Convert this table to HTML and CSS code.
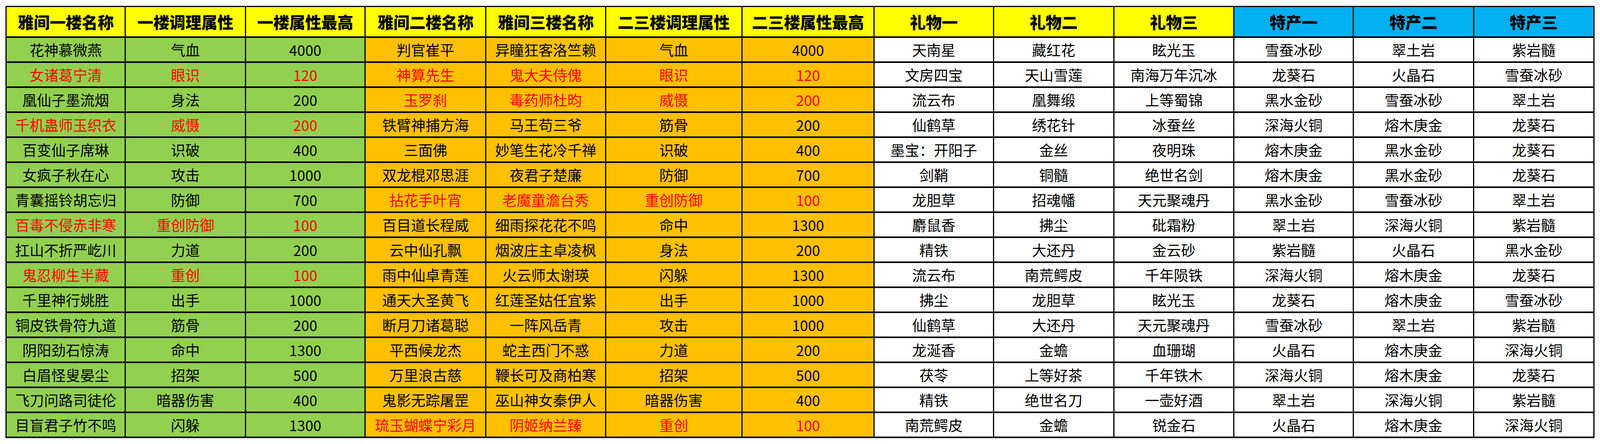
FILE: index.html
```html
<!DOCTYPE html>
<html lang="zh-CN">
<head>
<meta charset="utf-8">
<title>雅间属性表</title>
<link rel="stylesheet" href="styles.css">
</head>
<body>
<div class="sheet">
  <div class="cell head yellow">雅间一楼名称</div>
  <div class="cell head yellow">一楼调理属性</div>
  <div class="cell head yellow">一楼属性最高</div>
  <div class="cell head yellow">雅间二楼名称</div>
  <div class="cell head yellow">雅间三楼名称</div>
  <div class="cell head yellow">二三楼调理属性</div>
  <div class="cell head yellow">二三楼属性最高</div>
  <div class="cell head yellow">礼物一</div>
  <div class="cell head yellow">礼物二</div>
  <div class="cell head yellow">礼物三</div>
  <div class="cell head blue">特产一</div>
  <div class="cell head blue">特产二</div>
  <div class="cell head blue">特产三</div>

  <div class="cell green">花神慕微燕</div><div class="cell green">气血</div><div class="cell green">4000</div>
  <div class="cell orange">判官崔平</div><div class="cell orange">异瞳狂客洛竺赖</div><div class="cell orange">气血</div><div class="cell orange">4000</div>
  <div class="cell">天南星</div><div class="cell">藏红花</div><div class="cell">眩光玉</div><div class="cell">雪蚕冰砂</div><div class="cell">翠土岩</div><div class="cell">紫岩髓</div>

  <div class="cell green red">女诸葛宁清</div><div class="cell green red">眼识</div><div class="cell green red">120</div>
  <div class="cell orange red">神算先生</div><div class="cell orange red">鬼大夫侍傀</div><div class="cell orange red">眼识</div><div class="cell orange red">120</div>
  <div class="cell">文房四宝</div><div class="cell">天山雪莲</div><div class="cell">南海万年沉冰</div><div class="cell">龙葵石</div><div class="cell">火晶石</div><div class="cell">雪蚕冰砂</div>

  <div class="cell green">凰仙子墨流烟</div><div class="cell green">身法</div><div class="cell green">200</div>
  <div class="cell orange red">玉罗刹</div><div class="cell orange red">毒药师杜昀</div><div class="cell orange red">威慑</div><div class="cell orange red">200</div>
  <div class="cell">流云布</div><div class="cell">凰舞缎</div><div class="cell">上等蜀锦</div><div class="cell">黑水金砂</div><div class="cell">雪蚕冰砂</div><div class="cell">翠土岩</div>

  <div class="cell green red">千机蛊师玉织衣</div><div class="cell green red">威慑</div><div class="cell green red">200</div>
  <div class="cell orange">铁臂神捕方海</div><div class="cell orange">马王苟三爷</div><div class="cell orange">筋骨</div><div class="cell orange">200</div>
  <div class="cell">仙鹤草</div><div class="cell">绣花针</div><div class="cell">冰蚕丝</div><div class="cell">深海火铜</div><div class="cell">熔木庚金</div><div class="cell">龙葵石</div>

  <div class="cell green">百变仙子席琳</div><div class="cell green">识破</div><div class="cell green">400</div>
  <div class="cell orange">三面佛</div><div class="cell orange">妙笔生花冷千禅</div><div class="cell orange">识破</div><div class="cell orange">400</div>
  <div class="cell">墨宝：开阳子</div><div class="cell">金丝</div><div class="cell">夜明珠</div><div class="cell">熔木庚金</div><div class="cell">黑水金砂</div><div class="cell">龙葵石</div>

  <div class="cell green">女疯子秋在心</div><div class="cell green">攻击</div><div class="cell green">1000</div>
  <div class="cell orange">双龙棍邓思涯</div><div class="cell orange">夜君子楚廉</div><div class="cell orange">防御</div><div class="cell orange">700</div>
  <div class="cell">剑鞘</div><div class="cell">铜髓</div><div class="cell">绝世名剑</div><div class="cell">熔木庚金</div><div class="cell">黑水金砂</div><div class="cell">龙葵石</div>

  <div class="cell green">青囊摇铃胡忘归</div><div class="cell green">防御</div><div class="cell green">700</div>
  <div class="cell orange red">拈花手叶宵</div><div class="cell orange red">老魔童澹台秀</div><div class="cell orange red">重创防御</div><div class="cell orange red">100</div>
  <div class="cell">龙胆草</div><div class="cell">招魂幡</div><div class="cell">天元聚魂丹</div><div class="cell">黑水金砂</div><div class="cell">雪蚕冰砂</div><div class="cell">翠土岩</div>

  <div class="cell green red">百毒不侵赤非寒</div><div class="cell green red">重创防御</div><div class="cell green red">100</div>
  <div class="cell orange">百目道长程威</div><div class="cell orange">细雨探花花不鸣</div><div class="cell orange">命中</div><div class="cell orange">1300</div>
  <div class="cell">麝鼠香</div><div class="cell">拂尘</div><div class="cell">砒霜粉</div><div class="cell">翠土岩</div><div class="cell">深海火铜</div><div class="cell">紫岩髓</div>

  <div class="cell green">扛山不折严屹川</div><div class="cell green">力道</div><div class="cell green">200</div>
  <div class="cell orange">云中仙孔飘</div><div class="cell orange">烟波庄主卓凌枫</div><div class="cell orange">身法</div><div class="cell orange">200</div>
  <div class="cell">精铁</div><div class="cell">大还丹</div><div class="cell">金云砂</div><div class="cell">紫岩髓</div><div class="cell">火晶石</div><div class="cell">黑水金砂</div>

  <div class="cell green red">鬼忍柳生半藏</div><div class="cell green red">重创</div><div class="cell green red">100</div>
  <div class="cell orange">雨中仙卓青莲</div><div class="cell orange">火云师太谢瑛</div><div class="cell orange">闪躲</div><div class="cell orange">1300</div>
  <div class="cell">流云布</div><div class="cell">南荒鳄皮</div><div class="cell">千年陨铁</div><div class="cell">深海火铜</div><div class="cell">熔木庚金</div><div class="cell">龙葵石</div>

  <div class="cell green">千里神行姚胜</div><div class="cell green">出手</div><div class="cell green">1000</div>
  <div class="cell orange">通天大圣黄飞</div><div class="cell orange">红莲圣姑任宜紫</div><div class="cell orange">出手</div><div class="cell orange">1000</div>
  <div class="cell">拂尘</div><div class="cell">龙胆草</div><div class="cell">眩光玉</div><div class="cell">龙葵石</div><div class="cell">熔木庚金</div><div class="cell">雪蚕冰砂</div>

  <div class="cell green">铜皮铁骨符九道</div><div class="cell green">筋骨</div><div class="cell green">200</div>
  <div class="cell orange">断月刀诸葛聪</div><div class="cell orange">一阵风岳青</div><div class="cell orange">攻击</div><div class="cell orange">1000</div>
  <div class="cell">仙鹤草</div><div class="cell">大还丹</div><div class="cell">天元聚魂丹</div><div class="cell">雪蚕冰砂</div><div class="cell">翠土岩</div><div class="cell">紫岩髓</div>

  <div class="cell green">阴阳劲石惊涛</div><div class="cell green">命中</div><div class="cell green">1300</div>
  <div class="cell orange">平西候龙杰</div><div class="cell orange">蛇主西门不惑</div><div class="cell orange">力道</div><div class="cell orange">200</div>
  <div class="cell">龙涎香</div><div class="cell">金蟾</div><div class="cell">血珊瑚</div><div class="cell">火晶石</div><div class="cell">熔木庚金</div><div class="cell">深海火铜</div>

  <div class="cell green">白眉怪叟晏尘</div><div class="cell green">招架</div><div class="cell green">500</div>
  <div class="cell orange">万里浪古慈</div><div class="cell orange">鞭长可及商柏寒</div><div class="cell orange">招架</div><div class="cell orange">500</div>
  <div class="cell">茯苓</div><div class="cell">上等好茶</div><div class="cell">千年铁木</div><div class="cell">深海火铜</div><div class="cell">熔木庚金</div><div class="cell">龙葵石</div>

  <div class="cell green">飞刀问路司徒伦</div><div class="cell green">暗器伤害</div><div class="cell green">400</div>
  <div class="cell orange">鬼影无踪屠罡</div><div class="cell orange">巫山神女秦伊人</div><div class="cell orange">暗器伤害</div><div class="cell orange">400</div>
  <div class="cell">精铁</div><div class="cell">绝世名刀</div><div class="cell">一壶好酒</div><div class="cell">翠土岩</div><div class="cell">深海火铜</div><div class="cell">紫岩髓</div>

  <div class="cell green">目盲君子竹不鸣</div><div class="cell green">闪躲</div><div class="cell green">1300</div>
  <div class="cell orange red">琉玉蝴蝶宁彩月</div><div class="cell orange red">阴姬纳兰臻</div><div class="cell orange red">重创</div><div class="cell orange red">100</div>
  <div class="cell">南荒鳄皮</div><div class="cell">金蟾</div><div class="cell">锐金石</div><div class="cell">火晶石</div><div class="cell">熔木庚金</div><div class="cell">深海火铜</div>
</div>
</body>
</html>
```
FILE: styles.css
```css
html, body {
  margin: 0;
  padding: 0;
  background: #ffffff;
}

body {
  padding: 15px 0 0 0.343vw;
  font-family: "Noto Sans CJK SC", "Noto Sans", sans-serif;
  color: #000000;
  overflow: hidden;
}

/* column widths follow the reference proportions and scale with the viewport */
.sheet {
  display: grid;
  width: 99.314vw;
  grid-template-columns: 326fr 328fr 327fr 330fr 327fr 373fr 361fr 326fr 329fr 328fr 327fr 328fr 329fr;
  grid-template-rows: 79px;
  grid-auto-rows: 64px;
  box-sizing: border-box;
  border-left: 3px solid #000;
  border-top: 3px solid #000;
}

.cell {
  box-sizing: border-box;
  min-width: 0;
  display: flex;
  align-items: center;
  justify-content: center;
  border-right: 3px solid #000;
  border-bottom: 4px solid #000;
  font-size: 37px;
  line-height: 1;
  white-space: nowrap;
  background: #ffffff;
}

.head {
  font-size: 41px;
  font-weight: 900;
}

.yellow { background: #ffff00; }
.blue { background: #00b0f0; }
.green { background: #92d050; }
.orange { background: #ffc000; }
.red { color: #ff0000; }
```
